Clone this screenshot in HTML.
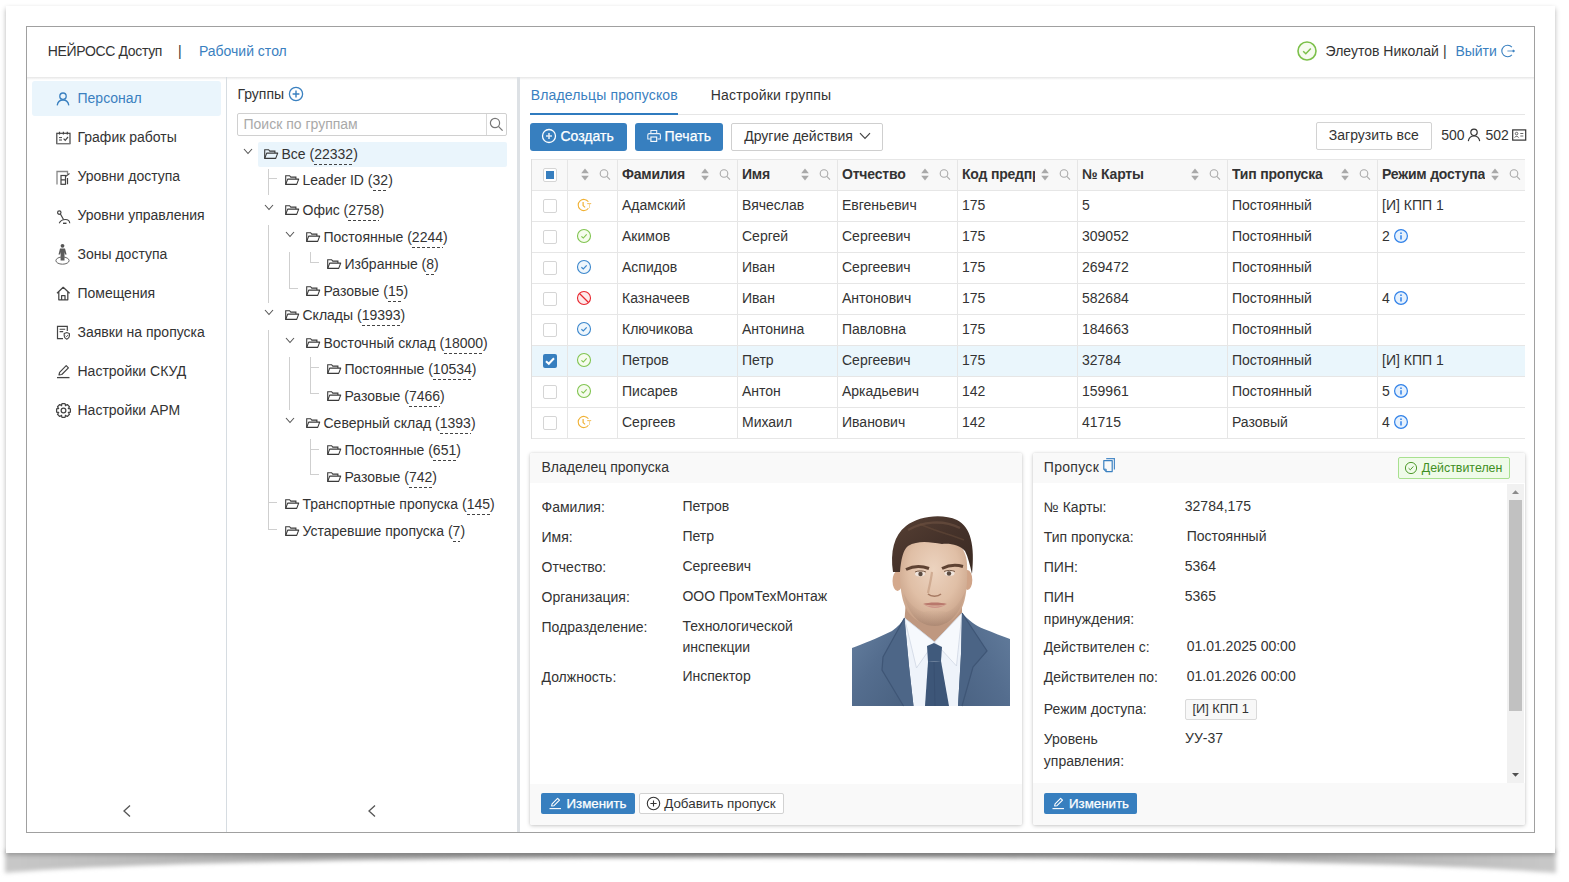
<!DOCTYPE html><html><head><meta charset="utf-8"><style>
*{box-sizing:border-box}
html,body{margin:0;padding:0}
body{width:1569px;height:882px;background:#fff;position:relative;overflow:hidden;font-family:"Liberation Sans",sans-serif;font-size:14px;color:#333}
.a{position:absolute}
.t{position:absolute;white-space:nowrap;line-height:16px;font-size:14px}
svg{position:absolute;overflow:visible}
.b{color:#3a80c0}
.cnt{background:linear-gradient(to right,#444 60%,transparent 60%) repeat-x 0 100%/5px 1px;padding-bottom:3px}
</style></head><body>
<svg style="left:0;top:0" width="1569" height="882">
<defs>
<filter id="bl" x="-5%" y="-100%" width="110%" height="300%"><feGaussianBlur stdDeviation="2.2"/></filter>
<linearGradient id="sg" x1="0" x2="1" y1="0" y2="0">
<stop offset="0" stop-color="#c8c8c8"/><stop offset="0.2" stop-color="#a8a8a8"/><stop offset="0.5" stop-color="#959595"/><stop offset="0.8" stop-color="#a8a8a8"/><stop offset="1" stop-color="#c8c8c8"/>
</linearGradient>
</defs>
<path d="M5 850 L1556 850 L1556 873 Q1380 858 780 857.5 Q180 858 5 873 Z" fill="url(#sg)" filter="url(#bl)"/>
</svg>
<div class="a" style="left:6px;top:6px;width:1549px;height:847px;background:#fff;box-shadow:0 1.5px 5px rgba(0,0,0,.3)"></div>
<div class="a" style="left:26px;top:26px;width:1509px;height:807px;border:1px solid #a0a0a0;background:#fff"></div>
<div class="a" style="left:27px;top:77px;width:1507px;height:3px;background:linear-gradient(#e6e6e6,#fff)"></div>
<div class="t" style="left:47.8px;top:43px;letter-spacing:-0.35px">НЕЙРОСС Доступ</div>
<div class="t" style="left:178px;top:43px;">|</div>
<div class="t" style="left:198.9px;top:43px;color:#3a80c0">Рабочий стол</div>
<svg style="left:1297px;top:41px" width="20" height="20" viewBox="0 0 20 20"><circle cx="10" cy="10" r="9" fill="#f6fbef" stroke="#7cc04a" stroke-width="1.6"/><path d="M6.2 10.3 L8.8 12.8 L13.8 7.4" fill="none" stroke="#7cc04a" stroke-width="1.5"/></svg>
<div class="t" style="left:1325.6px;top:43px;">Элеутов Николай</div>
<div class="t" style="left:1443px;top:43px;">|</div>
<div class="t" style="left:1455.4px;top:43px;color:#3a80c0">Выйти</div>
<svg style="left:1500px;top:44px" width="16" height="14" viewBox="0 0 16 14"><path d="M11.9 3.1 A5.8 5.8 0 1 0 11.9 10.9" fill="none" stroke="#3a80c0" stroke-width="1.1"/><path d="M7.4 7 H14.3" fill="none" stroke="#6fa2d2" stroke-width="1.1"/><path d="M13 5.9 L14.6 7 L13 8.1 Z" fill="#3a80c0" stroke="#3a80c0" stroke-width="0.8"/></svg>
<div class="a" style="left:226px;top:77px;width:1px;height:755px;background:#d6dce1"></div>
<div class="a" style="left:32px;top:81px;width:189px;height:35px;background:#eaf5fc;border-radius:3px"></div>
<div class="t" style="left:77.5px;top:90.2px;color:#3a80c0">Персонал</div>
<div class="t" style="left:77.5px;top:129.2px;">График работы</div>
<div class="t" style="left:77.5px;top:168.2px;">Уровни доступа</div>
<div class="t" style="left:77.5px;top:207.2px;">Уровни управления</div>
<div class="t" style="left:77.5px;top:246.2px;">Зоны доступа</div>
<div class="t" style="left:77.5px;top:285.2px;">Помещения</div>
<div class="t" style="left:77.5px;top:324.2px;">Заявки на пропуска</div>
<div class="t" style="left:77.5px;top:363.2px;">Настройки СКУД</div>
<div class="t" style="left:77.5px;top:402.2px;">Настройки АРМ</div>
<svg style="left:56px;top:92px" width="14" height="14" viewBox="0 0 14 14"><circle cx="7" cy="4.2" r="3.2" fill="none" stroke="#3a80c0" stroke-width="1.3"/><path d="M1.2 13.3 C1.8 9.5 4 8 7 8 C10 8 12.2 9.5 12.8 13.3" fill="none" stroke="#3a80c0" stroke-width="1.3"/></svg>
<svg style="left:56px;top:131px" width="15" height="14" viewBox="0 0 15 14"><rect x="0.8" y="2.3" width="13.2" height="10.3" fill="none" stroke="#444" stroke-width="1.2"/><path d="M3.5 0.8v2.6M7.4 0.8v2.6M11.3 0.8v2.6" stroke="#444" stroke-width="1.2"/><path d="M3 6.6h3M3 9h3" stroke="#444" stroke-width="1"/><path d="M7.6 7.6 L9.2 9.3 L12 6" fill="none" stroke="#444" stroke-width="1.2"/><path d="M0.8 12.6h13.2" stroke="#777" stroke-width="1.2"/></svg>
<svg style="left:56px;top:170px" width="15" height="15" viewBox="0 0 15 15"><path d="M1 14.5V1.5H11.5V4" fill="none" stroke="#888" stroke-width="1.3"/><rect x="5" y="5.5" width="4.5" height="8.8" fill="none" stroke="#444" stroke-width="1.2"/><path d="M11.5 8v6.3M5 9.8h4.5" stroke="#444" stroke-width="1.2"/><path d="M9.5 6.5 L13.5 3.5" stroke="#444" stroke-width="1.1"/></svg>
<svg style="left:57px;top:210px" width="14" height="15" viewBox="0 0 14 15"><circle cx="2.3" cy="2.6" r="1.7" fill="none" stroke="#444" stroke-width="1.2"/><path d="M3.4 4 L6.5 9.5" stroke="#444" stroke-width="1.2"/><path d="M2.2 13.2 C3.5 10.5 6 9.5 8.5 9.5 C11 9.5 12.5 11 12.8 13.2" fill="none" stroke="#444" stroke-width="1.1"/><path d="M6 13.3h3.5" stroke="#444" stroke-width="1.4"/></svg>
<svg style="left:55px;top:243px" width="16" height="23" viewBox="0 0 16 23"><circle cx="7.5" cy="2.8" r="1.9" fill="#555"/><path d="M5 5.5 h5 l1.6 6 h-1.5 l-0.6 -2.5 v8.5 h-3.9 v-8.5 l-0.6 2.5 h-1.5 Z" fill="#5a5a5a"/><ellipse cx="7.5" cy="17.6" rx="6.6" ry="3.6" fill="none" stroke="#666" stroke-width="1"/></svg>
<svg style="left:56px;top:286px" width="15" height="15" viewBox="0 0 15 15"><path d="M1 7.3 L7.2 1.3 L13.6 7.3 M2.8 5.8V13.8H11.8V5.8 M5.6 13.8V9.6H9V13.8" fill="none" stroke="#444" stroke-width="1.25" stroke-linejoin="round"/></svg>
<svg style="left:56px;top:325px" width="15" height="15" viewBox="0 0 15 15"><path d="M7 13.6H1.5V1.4H11.3V6" fill="none" stroke="#444" stroke-width="1.2"/><path d="M3.6 4.2h5.6M3.6 6.6h3.6" stroke="#444" stroke-width="1.1"/><path d="M8.2 8.6 L10.8 7.5 L13.4 8.6 V11 C13.4 12.6 12 13.6 10.8 14.2 C9.6 13.6 8.2 12.6 8.2 11 Z" fill="none" stroke="#444" stroke-width="1.1"/><path d="M9.6 10.7 L10.6 11.7 L12.2 9.9" fill="none" stroke="#444" stroke-width="0.9"/></svg>
<svg style="left:56px;top:364px" width="15" height="15" viewBox="0 0 15 15"><path d="M3 11 L3.6 8.3 L10.2 1.7 L12.4 3.9 L5.8 10.5 Z" fill="none" stroke="#444" stroke-width="1.2" stroke-linejoin="round"/><path d="M1 13.6H13.5" stroke="#444" stroke-width="1.3"/></svg>
<svg style="left:56px;top:403px" width="15" height="15" viewBox="0 0 14 14"><polygon points="13.44,5.56 13.44,8.44 11.47,9.00 11.58,8.75 12.57,10.54 10.54,12.57 8.75,11.58 9.00,11.47 8.44,13.44 5.56,13.44 5.00,11.47 5.25,11.58 3.46,12.57 1.43,10.54 2.42,8.75 2.53,9.00 0.56,8.44 0.56,5.56 2.53,5.00 2.42,5.25 1.43,3.46 3.46,1.43 5.25,2.42 5.00,2.53 5.56,0.56 8.44,0.56 9.00,2.53 8.75,2.42 10.54,1.43 12.57,3.46 11.58,5.25 11.47,5.00" fill="none" stroke="#444" stroke-width="1.15" stroke-linejoin="round"/><circle cx="7" cy="7" r="2.2" fill="none" stroke="#444" stroke-width="1.15"/></svg>
<svg style="left:122px;top:804px" width="10" height="14" viewBox="0 0 10 14"><path d="M8 1.5 L2 7 L8 12.5" fill="none" stroke="#555" stroke-width="1.3"/></svg>
<svg style="left:367px;top:804px" width="10" height="14" viewBox="0 0 10 14"><path d="M8 1.5 L2 7 L8 12.5" fill="none" stroke="#555" stroke-width="1.3"/></svg>
<div class="a" style="left:517px;top:77px;width:3px;height:755px;background:#dde1e5"></div>
<div class="t" style="left:237.4px;top:85.9px;">Группы</div>
<svg style="left:288px;top:86px" width="16" height="16" viewBox="0 0 16 16"><circle cx="8" cy="8" r="6.6" fill="none" stroke="#3a80c0" stroke-width="1.3"/><path d="M8 4.6V11.4M4.6 8H11.4" stroke="#3a80c0" stroke-width="1.4"/></svg>
<div class="a" style="left:237px;top:113px;width:270px;height:23px;border:1px solid #d0d0d0;border-radius:2px"></div>
<div class="a" style="left:486px;top:114px;width:1px;height:21px;background:#d8d8d8"></div>
<div class="t" style="left:243.5px;top:116px;color:#a9a9a9">Поиск по группам</div>
<svg style="left:489px;top:117px" width="15" height="15" viewBox="0 0 15 15"><circle cx="6" cy="6" r="4.6" fill="none" stroke="#777" stroke-width="1.2"/><path d="M9.4 9.4 L13.6 13.6" stroke="#777" stroke-width="1.3"/></svg>
<div class="a" style="left:258px;top:142px;width:249px;height:25px;background:#eaf5fc;border-radius:2px"></div>
<svg style="left:264px;top:149px" width="15" height="11" viewBox="0 0 15 11"><path d="M0.7 9.4V0.7H4.6L5.8 2.1H10.9V4.1" fill="none" stroke="#3a3a3a" stroke-width="1.1"/><path d="M0.7 9.4 L2.7 4.1 H13.7 L11.7 9.4 Z" fill="none" stroke="#3a3a3a" stroke-width="1.1" stroke-linejoin="round"/></svg>
<svg style="left:243.3px;top:148px" width="10" height="7" viewBox="0 0 10 7"><path d="M1 1 L5 5.5 L9 1" fill="none" stroke="#555" stroke-width="1.1"/></svg>
<div class="t" style="left:281.5px;top:146px;">Все (<span class="cnt">22332</span>)</div>
<svg style="left:285px;top:174.8px" width="15" height="11" viewBox="0 0 15 11"><path d="M0.7 9.4V0.7H4.6L5.8 2.1H10.9V4.1" fill="none" stroke="#3a3a3a" stroke-width="1.1"/><path d="M0.7 9.4 L2.7 4.1 H13.7 L11.7 9.4 Z" fill="none" stroke="#3a3a3a" stroke-width="1.1" stroke-linejoin="round"/></svg>
<div class="t" style="left:302.5px;top:171.8px;">Leader ID (<span class="cnt">32</span>)</div>
<svg style="left:285px;top:205px" width="15" height="11" viewBox="0 0 15 11"><path d="M0.7 9.4V0.7H4.6L5.8 2.1H10.9V4.1" fill="none" stroke="#3a3a3a" stroke-width="1.1"/><path d="M0.7 9.4 L2.7 4.1 H13.7 L11.7 9.4 Z" fill="none" stroke="#3a3a3a" stroke-width="1.1" stroke-linejoin="round"/></svg>
<svg style="left:264.3px;top:204px" width="10" height="7" viewBox="0 0 10 7"><path d="M1 1 L5 5.5 L9 1" fill="none" stroke="#555" stroke-width="1.1"/></svg>
<div class="t" style="left:302.5px;top:202px;">Офис (<span class="cnt">2758</span>)</div>
<svg style="left:306px;top:231.7px" width="15" height="11" viewBox="0 0 15 11"><path d="M0.7 9.4V0.7H4.6L5.8 2.1H10.9V4.1" fill="none" stroke="#3a3a3a" stroke-width="1.1"/><path d="M0.7 9.4 L2.7 4.1 H13.7 L11.7 9.4 Z" fill="none" stroke="#3a3a3a" stroke-width="1.1" stroke-linejoin="round"/></svg>
<svg style="left:285.3px;top:230.7px" width="10" height="7" viewBox="0 0 10 7"><path d="M1 1 L5 5.5 L9 1" fill="none" stroke="#555" stroke-width="1.1"/></svg>
<div class="t" style="left:323.5px;top:228.7px;">Постоянные (<span class="cnt">2244</span>)</div>
<svg style="left:327px;top:258.9px" width="15" height="11" viewBox="0 0 15 11"><path d="M0.7 9.4V0.7H4.6L5.8 2.1H10.9V4.1" fill="none" stroke="#3a3a3a" stroke-width="1.1"/><path d="M0.7 9.4 L2.7 4.1 H13.7 L11.7 9.4 Z" fill="none" stroke="#3a3a3a" stroke-width="1.1" stroke-linejoin="round"/></svg>
<div class="t" style="left:344.5px;top:255.89999999999998px;">Избранные (<span class="cnt">8</span>)</div>
<svg style="left:306px;top:285.6px" width="15" height="11" viewBox="0 0 15 11"><path d="M0.7 9.4V0.7H4.6L5.8 2.1H10.9V4.1" fill="none" stroke="#3a3a3a" stroke-width="1.1"/><path d="M0.7 9.4 L2.7 4.1 H13.7 L11.7 9.4 Z" fill="none" stroke="#3a3a3a" stroke-width="1.1" stroke-linejoin="round"/></svg>
<div class="t" style="left:323.5px;top:282.6px;">Разовые (<span class="cnt">15</span>)</div>
<svg style="left:285px;top:309.9px" width="15" height="11" viewBox="0 0 15 11"><path d="M0.7 9.4V0.7H4.6L5.8 2.1H10.9V4.1" fill="none" stroke="#3a3a3a" stroke-width="1.1"/><path d="M0.7 9.4 L2.7 4.1 H13.7 L11.7 9.4 Z" fill="none" stroke="#3a3a3a" stroke-width="1.1" stroke-linejoin="round"/></svg>
<svg style="left:264.3px;top:308.9px" width="10" height="7" viewBox="0 0 10 7"><path d="M1 1 L5 5.5 L9 1" fill="none" stroke="#555" stroke-width="1.1"/></svg>
<div class="t" style="left:302.5px;top:306.9px;">Склады (<span class="cnt">19393</span>)</div>
<svg style="left:306px;top:337.5px" width="15" height="11" viewBox="0 0 15 11"><path d="M0.7 9.4V0.7H4.6L5.8 2.1H10.9V4.1" fill="none" stroke="#3a3a3a" stroke-width="1.1"/><path d="M0.7 9.4 L2.7 4.1 H13.7 L11.7 9.4 Z" fill="none" stroke="#3a3a3a" stroke-width="1.1" stroke-linejoin="round"/></svg>
<svg style="left:285.3px;top:336.5px" width="10" height="7" viewBox="0 0 10 7"><path d="M1 1 L5 5.5 L9 1" fill="none" stroke="#555" stroke-width="1.1"/></svg>
<div class="t" style="left:323.5px;top:334.5px;">Восточный склад (<span class="cnt">18000</span>)</div>
<svg style="left:327px;top:364.2px" width="15" height="11" viewBox="0 0 15 11"><path d="M0.7 9.4V0.7H4.6L5.8 2.1H10.9V4.1" fill="none" stroke="#3a3a3a" stroke-width="1.1"/><path d="M0.7 9.4 L2.7 4.1 H13.7 L11.7 9.4 Z" fill="none" stroke="#3a3a3a" stroke-width="1.1" stroke-linejoin="round"/></svg>
<div class="t" style="left:344.5px;top:361.2px;">Постоянные (<span class="cnt">10534</span>)</div>
<svg style="left:327px;top:391.1px" width="15" height="11" viewBox="0 0 15 11"><path d="M0.7 9.4V0.7H4.6L5.8 2.1H10.9V4.1" fill="none" stroke="#3a3a3a" stroke-width="1.1"/><path d="M0.7 9.4 L2.7 4.1 H13.7 L11.7 9.4 Z" fill="none" stroke="#3a3a3a" stroke-width="1.1" stroke-linejoin="round"/></svg>
<div class="t" style="left:344.5px;top:388.1px;">Разовые (<span class="cnt">7466</span>)</div>
<svg style="left:306px;top:417.8px" width="15" height="11" viewBox="0 0 15 11"><path d="M0.7 9.4V0.7H4.6L5.8 2.1H10.9V4.1" fill="none" stroke="#3a3a3a" stroke-width="1.1"/><path d="M0.7 9.4 L2.7 4.1 H13.7 L11.7 9.4 Z" fill="none" stroke="#3a3a3a" stroke-width="1.1" stroke-linejoin="round"/></svg>
<svg style="left:285.3px;top:416.8px" width="10" height="7" viewBox="0 0 10 7"><path d="M1 1 L5 5.5 L9 1" fill="none" stroke="#555" stroke-width="1.1"/></svg>
<div class="t" style="left:323.5px;top:414.8px;">Северный склад (<span class="cnt">1393</span>)</div>
<svg style="left:327px;top:444.8px" width="15" height="11" viewBox="0 0 15 11"><path d="M0.7 9.4V0.7H4.6L5.8 2.1H10.9V4.1" fill="none" stroke="#3a3a3a" stroke-width="1.1"/><path d="M0.7 9.4 L2.7 4.1 H13.7 L11.7 9.4 Z" fill="none" stroke="#3a3a3a" stroke-width="1.1" stroke-linejoin="round"/></svg>
<div class="t" style="left:344.5px;top:441.8px;">Постоянные (<span class="cnt">651</span>)</div>
<svg style="left:327px;top:471.7px" width="15" height="11" viewBox="0 0 15 11"><path d="M0.7 9.4V0.7H4.6L5.8 2.1H10.9V4.1" fill="none" stroke="#3a3a3a" stroke-width="1.1"/><path d="M0.7 9.4 L2.7 4.1 H13.7 L11.7 9.4 Z" fill="none" stroke="#3a3a3a" stroke-width="1.1" stroke-linejoin="round"/></svg>
<div class="t" style="left:344.5px;top:468.7px;">Разовые (<span class="cnt">742</span>)</div>
<svg style="left:285px;top:499.2px" width="15" height="11" viewBox="0 0 15 11"><path d="M0.7 9.4V0.7H4.6L5.8 2.1H10.9V4.1" fill="none" stroke="#3a3a3a" stroke-width="1.1"/><path d="M0.7 9.4 L2.7 4.1 H13.7 L11.7 9.4 Z" fill="none" stroke="#3a3a3a" stroke-width="1.1" stroke-linejoin="round"/></svg>
<div class="t" style="left:302.5px;top:496.2px;">Транспортные пропуска (<span class="cnt">145</span>)</div>
<svg style="left:285px;top:525.9px" width="15" height="11" viewBox="0 0 15 11"><path d="M0.7 9.4V0.7H4.6L5.8 2.1H10.9V4.1" fill="none" stroke="#3a3a3a" stroke-width="1.1"/><path d="M0.7 9.4 L2.7 4.1 H13.7 L11.7 9.4 Z" fill="none" stroke="#3a3a3a" stroke-width="1.1" stroke-linejoin="round"/></svg>
<div class="t" style="left:302.5px;top:522.9px;">Устаревшие пропуска (<span class="cnt">7</span>)</div>
<div class="a" style="left:268px;top:169px;width:1px;height:26px;background:#cfcfcf"></div>
<div class="a" style="left:268px;top:178px;width:9px;height:1px;background:#cfcfcf"></div>
<div class="a" style="left:268px;top:225px;width:1px;height:78px;background:#cfcfcf"></div>
<div class="a" style="left:289px;top:252px;width:1px;height:37px;background:#cfcfcf"></div>
<div class="a" style="left:289px;top:288px;width:9px;height:1px;background:#cfcfcf"></div>
<div class="a" style="left:310px;top:252px;width:1px;height:11px;background:#cfcfcf"></div>
<div class="a" style="left:310px;top:262px;width:9px;height:1px;background:#cfcfcf"></div>
<div class="a" style="left:268px;top:330px;width:1px;height:200px;background:#cfcfcf"></div>
<div class="a" style="left:268px;top:502px;width:9px;height:1px;background:#cfcfcf"></div>
<div class="a" style="left:268px;top:529px;width:9px;height:1px;background:#cfcfcf"></div>
<div class="a" style="left:289px;top:357px;width:1px;height:53px;background:#cfcfcf"></div>
<div class="a" style="left:310px;top:357px;width:1px;height:37px;background:#cfcfcf"></div>
<div class="a" style="left:310px;top:367px;width:9px;height:1px;background:#cfcfcf"></div>
<div class="a" style="left:310px;top:393px;width:9px;height:1px;background:#cfcfcf"></div>
<div class="a" style="left:310px;top:439px;width:1px;height:36px;background:#cfcfcf"></div>
<div class="a" style="left:310px;top:449px;width:9px;height:1px;background:#cfcfcf"></div>
<div class="a" style="left:310px;top:474px;width:9px;height:1px;background:#cfcfcf"></div>
<div class="a" style="left:530px;top:114px;width:995px;height:1px;background:#e6e6e6"></div>
<div class="a" style="left:530px;top:113px;width:148px;height:2px;background:#2f7bbf"></div>
<div class="t" style="left:530.7px;top:87px;color:#3a80c0;letter-spacing:0.15px">Владельцы пропусков</div>
<div class="t" style="left:710.7px;top:87px;letter-spacing:0.19px">Настройки группы</div>
<div class="a" style="left:530px;top:123px;width:97px;height:28px;background:#377fbf;border-radius:3px"></div>
<svg style="left:541px;top:128px" width="16" height="16" viewBox="0 0 16 16"><circle cx="8" cy="8" r="6.5" fill="none" stroke="#fff" stroke-width="1.3"/><path d="M8 5V11M5 8H11" stroke="#dfe9f3" stroke-width="1.6"/></svg>
<div class="t" style="left:560.5px;top:128px;color:#fff;-webkit-text-stroke:0.25px #fff">Создать</div>
<div class="a" style="left:635px;top:123px;width:88px;height:28px;background:#377fbf;border-radius:3px"></div>
<svg style="left:646px;top:129px" width="16" height="14" viewBox="0 0 16 14"><path d="M4.9 4.4V1.5H10.7V4.4" fill="none" stroke="#e8f0f8" stroke-width="1.1"/><path d="M4.4 10 H1.8 V6 Q1.8 4.6 3.2 4.6 H13 Q14.4 4.6 14.4 6 V10 H11.6" fill="none" stroke="#e8f0f8" stroke-width="1.1"/><rect x="4.9" y="8" width="5.8" height="4.4" fill="#377fbf" stroke="#fff" stroke-width="1.1"/></svg>
<div class="t" style="left:664.5px;top:128px;color:#fff;-webkit-text-stroke:0.25px #fff;letter-spacing:0.15px">Печать</div>
<div class="a" style="left:731px;top:123px;width:152px;height:28px;border:1px solid #cfcfcf;border-radius:2px;background:#fff"></div>
<div class="t" style="left:744.2px;top:128px;">Другие действия</div>
<svg style="left:859px;top:132px" width="12" height="8" viewBox="0 0 12 8"><path d="M1 1.2 L6 6.5 L11 1.2" fill="none" stroke="#444" stroke-width="1.2"/></svg>
<div class="a" style="left:1316px;top:122px;width:116px;height:28px;border:1px solid #d2d2d2;border-radius:2px;background:#fff"></div>
<div class="t" style="left:1328.8px;top:126.80000000000001px;">Загрузить все</div>
<div class="t" style="left:1441.2px;top:126.80000000000001px;">500</div>
<svg style="left:1467px;top:128px" width="14" height="14" viewBox="0 0 14 14"><circle cx="7" cy="4.3" r="3.2" fill="none" stroke="#333" stroke-width="1.2"/><path d="M1.3 13.2 C1.8 9.5 4 8 7 8 C10 8 12.2 9.5 12.7 13.2" fill="none" stroke="#333" stroke-width="1.2"/></svg>
<div class="t" style="left:1485.5px;top:126.80000000000001px;">502</div>
<svg style="left:1512px;top:129px" width="15" height="12" viewBox="0 0 15 12"><rect x="0.7" y="0.9" width="13" height="10.2" fill="none" stroke="#333" stroke-width="1.2"/><circle cx="4.6" cy="4.6" r="1.3" fill="none" stroke="#555" stroke-width="0.9"/><path d="M2.6 8.6 C3 7 6.2 7 6.6 8.6 M8.3 4.5h3M8.3 7h3" fill="none" stroke="#555" stroke-width="0.9"/></svg>
<div class="a" style="left:531px;top:159px;width:994px;height:31px;background:#f8f8f8"></div>
<div class="a" style="left:531px;top:159px;width:994px;height:1px;background:#e6e6e6"></div>
<div class="a" style="left:531px;top:190px;width:994px;height:1px;background:#e6e6e6"></div>
<div class="a" style="left:531px;top:221px;width:994px;height:1px;background:#e6e6e6"></div>
<div class="a" style="left:531px;top:252px;width:994px;height:1px;background:#e6e6e6"></div>
<div class="a" style="left:531px;top:283px;width:994px;height:1px;background:#e6e6e6"></div>
<div class="a" style="left:531px;top:314px;width:994px;height:1px;background:#e6e6e6"></div>
<div class="a" style="left:531px;top:345px;width:994px;height:1px;background:#e6e6e6"></div>
<div class="a" style="left:531px;top:376px;width:994px;height:1px;background:#e6e6e6"></div>
<div class="a" style="left:531px;top:407px;width:994px;height:1px;background:#e6e6e6"></div>
<div class="a" style="left:531px;top:438px;width:994px;height:1px;background:#e6e6e6"></div>
<div class="a" style="left:532px;top:346px;width:993px;height:30px;background:#eaf6fc"></div>
<div class="a" style="left:531px;top:159px;width:1px;height:280px;background:#dedede"></div>
<div class="a" style="left:567px;top:159px;width:1px;height:280px;background:#e6e6e6"></div>
<div class="a" style="left:617px;top:159px;width:1px;height:280px;background:#e6e6e6"></div>
<div class="a" style="left:737px;top:159px;width:1px;height:280px;background:#e6e6e6"></div>
<div class="a" style="left:837px;top:159px;width:1px;height:280px;background:#e6e6e6"></div>
<div class="a" style="left:957px;top:159px;width:1px;height:280px;background:#e6e6e6"></div>
<div class="a" style="left:1077px;top:159px;width:1px;height:280px;background:#e6e6e6"></div>
<div class="a" style="left:1227px;top:159px;width:1px;height:280px;background:#e6e6e6"></div>
<div class="a" style="left:1377px;top:159px;width:1px;height:280px;background:#e6e6e6"></div>
<svg style="left:581px;top:168px" width="8" height="13" viewBox="0 0 8 13"><path d="M4 0.6 L7.8 5.3 H0.2 Z M0.2 7.7 H7.8 L4 12.4 Z" fill="#a9a9a9"/></svg>
<svg style="left:599px;top:168px" width="12" height="13" viewBox="0 0 12 13"><circle cx="5" cy="5.5" r="3.8" fill="none" stroke="#a9a9a9" stroke-width="1.1"/><path d="M7.8 8.3 L11 11.6" stroke="#a9a9a9" stroke-width="1.1"/></svg>
<svg style="left:701px;top:168px" width="8" height="13" viewBox="0 0 8 13"><path d="M4 0.6 L7.8 5.3 H0.2 Z M0.2 7.7 H7.8 L4 12.4 Z" fill="#a9a9a9"/></svg>
<svg style="left:719px;top:168px" width="12" height="13" viewBox="0 0 12 13"><circle cx="5" cy="5.5" r="3.8" fill="none" stroke="#a9a9a9" stroke-width="1.1"/><path d="M7.8 8.3 L11 11.6" stroke="#a9a9a9" stroke-width="1.1"/></svg>
<div class="t" style="left:622px;top:166px;font-weight:bold;width:73px;overflow:hidden;letter-spacing:-0.2px">Фамилия</div>
<svg style="left:801px;top:168px" width="8" height="13" viewBox="0 0 8 13"><path d="M4 0.6 L7.8 5.3 H0.2 Z M0.2 7.7 H7.8 L4 12.4 Z" fill="#a9a9a9"/></svg>
<svg style="left:819px;top:168px" width="12" height="13" viewBox="0 0 12 13"><circle cx="5" cy="5.5" r="3.8" fill="none" stroke="#a9a9a9" stroke-width="1.1"/><path d="M7.8 8.3 L11 11.6" stroke="#a9a9a9" stroke-width="1.1"/></svg>
<div class="t" style="left:742px;top:166px;font-weight:bold;width:53px;overflow:hidden;letter-spacing:-0.2px">Имя</div>
<svg style="left:921px;top:168px" width="8" height="13" viewBox="0 0 8 13"><path d="M4 0.6 L7.8 5.3 H0.2 Z M0.2 7.7 H7.8 L4 12.4 Z" fill="#a9a9a9"/></svg>
<svg style="left:939px;top:168px" width="12" height="13" viewBox="0 0 12 13"><circle cx="5" cy="5.5" r="3.8" fill="none" stroke="#a9a9a9" stroke-width="1.1"/><path d="M7.8 8.3 L11 11.6" stroke="#a9a9a9" stroke-width="1.1"/></svg>
<div class="t" style="left:842px;top:166px;font-weight:bold;width:73px;overflow:hidden;letter-spacing:-0.2px">Отчество</div>
<svg style="left:1041px;top:168px" width="8" height="13" viewBox="0 0 8 13"><path d="M4 0.6 L7.8 5.3 H0.2 Z M0.2 7.7 H7.8 L4 12.4 Z" fill="#a9a9a9"/></svg>
<svg style="left:1059px;top:168px" width="12" height="13" viewBox="0 0 12 13"><circle cx="5" cy="5.5" r="3.8" fill="none" stroke="#a9a9a9" stroke-width="1.1"/><path d="M7.8 8.3 L11 11.6" stroke="#a9a9a9" stroke-width="1.1"/></svg>
<div class="t" style="left:962px;top:166px;font-weight:bold;width:73px;overflow:hidden;letter-spacing:-0.2px">Код предприятия</div>
<svg style="left:1191px;top:168px" width="8" height="13" viewBox="0 0 8 13"><path d="M4 0.6 L7.8 5.3 H0.2 Z M0.2 7.7 H7.8 L4 12.4 Z" fill="#a9a9a9"/></svg>
<svg style="left:1209px;top:168px" width="12" height="13" viewBox="0 0 12 13"><circle cx="5" cy="5.5" r="3.8" fill="none" stroke="#a9a9a9" stroke-width="1.1"/><path d="M7.8 8.3 L11 11.6" stroke="#a9a9a9" stroke-width="1.1"/></svg>
<div class="t" style="left:1082px;top:166px;font-weight:bold;width:103px;overflow:hidden;letter-spacing:-0.2px">№ Карты</div>
<svg style="left:1341px;top:168px" width="8" height="13" viewBox="0 0 8 13"><path d="M4 0.6 L7.8 5.3 H0.2 Z M0.2 7.7 H7.8 L4 12.4 Z" fill="#a9a9a9"/></svg>
<svg style="left:1359px;top:168px" width="12" height="13" viewBox="0 0 12 13"><circle cx="5" cy="5.5" r="3.8" fill="none" stroke="#a9a9a9" stroke-width="1.1"/><path d="M7.8 8.3 L11 11.6" stroke="#a9a9a9" stroke-width="1.1"/></svg>
<div class="t" style="left:1232px;top:166px;font-weight:bold;width:103px;overflow:hidden;letter-spacing:-0.2px">Тип пропуска</div>
<svg style="left:1491px;top:168px" width="8" height="13" viewBox="0 0 8 13"><path d="M4 0.6 L7.8 5.3 H0.2 Z M0.2 7.7 H7.8 L4 12.4 Z" fill="#a9a9a9"/></svg>
<svg style="left:1509px;top:168px" width="12" height="13" viewBox="0 0 12 13"><circle cx="5" cy="5.5" r="3.8" fill="none" stroke="#a9a9a9" stroke-width="1.1"/><path d="M7.8 8.3 L11 11.6" stroke="#a9a9a9" stroke-width="1.1"/></svg>
<div class="t" style="left:1382px;top:166px;font-weight:bold;width:103px;overflow:hidden;letter-spacing:-0.2px">Режим доступа</div>
<div class="a" style="left:543px;top:168px;width:14px;height:14px;border:1.5px solid #d5d5d5;border-radius:2px;background:#fff"></div>
<div class="a" style="left:546px;top:171px;width:8px;height:8px;background:#377fbf"></div>
<div class="a" style="left:543px;top:199px;width:14px;height:14px;border:1.5px solid #d5d5d5;border-radius:2px;background:#fff"></div>
<svg style="left:576px;top:196.8px" width="16" height="16" viewBox="0 0 16 16"><path d="M12.4 4.8 A5.6 5.6 0 1 0 12.4 11.2" fill="none" stroke="#f0b134" stroke-width="1.1"/><path d="M7.1 4.9 V8.6 L9.1 10.4" fill="none" stroke="#f0b134" stroke-width="1.2"/><path d="M11.2 6.6 H15.2" stroke="#f3c060" stroke-width="1.1"/><path d="M13.5 6.6 V11" stroke="#f7d89a" stroke-width="1"/></svg>
<div class="t" style="left:622px;top:196.9px;">Адамский</div>
<div class="t" style="left:742px;top:196.9px;">Вячеслав</div>
<div class="t" style="left:842px;top:196.9px;">Евгеньевич</div>
<div class="t" style="left:962px;top:196.9px;">175</div>
<div class="t" style="left:1082px;top:196.9px;">5</div>
<div class="t" style="left:1232px;top:196.9px;">Постоянный</div>
<div class="t" style="left:1382px;top:196.9px;">[И] КПП 1</div>
<div class="a" style="left:543px;top:230px;width:14px;height:14px;border:1.5px solid #d5d5d5;border-radius:2px;background:#fff"></div>
<svg style="left:576px;top:227.8px" width="16" height="16" viewBox="0 0 16 16"><circle cx="8" cy="8" r="6.5" fill="#f6fcee" stroke="#80c450" stroke-width="1.1"/><path d="M5.4 8.3 L7.3 10 L10.7 6.3" fill="none" stroke="#80c450" stroke-width="1.1"/></svg>
<div class="t" style="left:622px;top:227.9px;">Акимов</div>
<div class="t" style="left:742px;top:227.9px;">Сергей</div>
<div class="t" style="left:842px;top:227.9px;">Сергеевич</div>
<div class="t" style="left:962px;top:227.9px;">175</div>
<div class="t" style="left:1082px;top:227.9px;">309052</div>
<div class="t" style="left:1232px;top:227.9px;">Постоянный</div>
<div class="t" style="left:1382px;top:227.9px;">2</div>
<svg style="left:1393px;top:227.8px" width="16" height="16" viewBox="0 0 16 16"><circle cx="8" cy="8" r="6.4" fill="#e6f1fd" stroke="#2f80e8" stroke-width="1.2"/><path d="M8 7.2V11.4" stroke="#2f80e8" stroke-width="1.5"/><circle cx="8" cy="5.2" r="0.85" fill="#2f80e8"/></svg>
<div class="a" style="left:543px;top:261px;width:14px;height:14px;border:1.5px solid #d5d5d5;border-radius:2px;background:#fff"></div>
<svg style="left:576px;top:258.8px" width="16" height="16" viewBox="0 0 16 16"><circle cx="8" cy="8" r="6.5" fill="#eef6fc" stroke="#3a86cc" stroke-width="1.1"/><path d="M5.4 8.3 L7.3 10 L10.7 6.3" fill="none" stroke="#3a86cc" stroke-width="1.2"/></svg>
<div class="t" style="left:622px;top:258.9px;">Аспидов</div>
<div class="t" style="left:742px;top:258.9px;">Иван</div>
<div class="t" style="left:842px;top:258.9px;">Сергеевич</div>
<div class="t" style="left:962px;top:258.9px;">175</div>
<div class="t" style="left:1082px;top:258.9px;">269472</div>
<div class="t" style="left:1232px;top:258.9px;">Постоянный</div>
<div class="a" style="left:543px;top:292px;width:14px;height:14px;border:1.5px solid #d5d5d5;border-radius:2px;background:#fff"></div>
<svg style="left:576px;top:289.8px" width="16" height="16" viewBox="0 0 16 16"><circle cx="8" cy="8" r="6.5" fill="#fde9ea" stroke="#e8262e" stroke-width="1.1"/><path d="M3.5 3.5 L12.5 12.5" stroke="#e8262e" stroke-width="1.2"/></svg>
<div class="t" style="left:622px;top:289.9px;">Казначеев</div>
<div class="t" style="left:742px;top:289.9px;">Иван</div>
<div class="t" style="left:842px;top:289.9px;">Антонович</div>
<div class="t" style="left:962px;top:289.9px;">175</div>
<div class="t" style="left:1082px;top:289.9px;">582684</div>
<div class="t" style="left:1232px;top:289.9px;">Постоянный</div>
<div class="t" style="left:1382px;top:289.9px;">4</div>
<svg style="left:1393px;top:289.8px" width="16" height="16" viewBox="0 0 16 16"><circle cx="8" cy="8" r="6.4" fill="#e6f1fd" stroke="#2f80e8" stroke-width="1.2"/><path d="M8 7.2V11.4" stroke="#2f80e8" stroke-width="1.5"/><circle cx="8" cy="5.2" r="0.85" fill="#2f80e8"/></svg>
<div class="a" style="left:543px;top:323px;width:14px;height:14px;border:1.5px solid #d5d5d5;border-radius:2px;background:#fff"></div>
<svg style="left:576px;top:320.8px" width="16" height="16" viewBox="0 0 16 16"><circle cx="8" cy="8" r="6.5" fill="#eef6fc" stroke="#3a86cc" stroke-width="1.1"/><path d="M5.4 8.3 L7.3 10 L10.7 6.3" fill="none" stroke="#3a86cc" stroke-width="1.2"/></svg>
<div class="t" style="left:622px;top:320.9px;">Ключикова</div>
<div class="t" style="left:742px;top:320.9px;">Антонина</div>
<div class="t" style="left:842px;top:320.9px;">Павловна</div>
<div class="t" style="left:962px;top:320.9px;">175</div>
<div class="t" style="left:1082px;top:320.9px;">184663</div>
<div class="t" style="left:1232px;top:320.9px;">Постоянный</div>
<div class="a" style="left:543px;top:354px;width:14px;height:14px;background:#377fbf;border-radius:2px"></div>
<svg style="left:543px;top:354px" width="14" height="14" viewBox="0 0 14 14"><path d="M3 7.2 L5.8 9.8 L11 4.2" fill="none" stroke="#fff" stroke-width="2"/></svg>
<svg style="left:576px;top:351.8px" width="16" height="16" viewBox="0 0 16 16"><circle cx="8" cy="8" r="6.5" fill="#f6fcee" stroke="#80c450" stroke-width="1.1"/><path d="M5.4 8.3 L7.3 10 L10.7 6.3" fill="none" stroke="#80c450" stroke-width="1.1"/></svg>
<div class="t" style="left:622px;top:351.9px;">Петров</div>
<div class="t" style="left:742px;top:351.9px;">Петр</div>
<div class="t" style="left:842px;top:351.9px;">Сергеевич</div>
<div class="t" style="left:962px;top:351.9px;">175</div>
<div class="t" style="left:1082px;top:351.9px;">32784</div>
<div class="t" style="left:1232px;top:351.9px;">Постоянный</div>
<div class="t" style="left:1382px;top:351.9px;">[И] КПП 1</div>
<div class="a" style="left:543px;top:385px;width:14px;height:14px;border:1.5px solid #d5d5d5;border-radius:2px;background:#fff"></div>
<svg style="left:576px;top:382.8px" width="16" height="16" viewBox="0 0 16 16"><circle cx="8" cy="8" r="6.5" fill="#f6fcee" stroke="#80c450" stroke-width="1.1"/><path d="M5.4 8.3 L7.3 10 L10.7 6.3" fill="none" stroke="#80c450" stroke-width="1.1"/></svg>
<div class="t" style="left:622px;top:382.9px;">Писарев</div>
<div class="t" style="left:742px;top:382.9px;">Антон</div>
<div class="t" style="left:842px;top:382.9px;">Аркадьевич</div>
<div class="t" style="left:962px;top:382.9px;">142</div>
<div class="t" style="left:1082px;top:382.9px;">159961</div>
<div class="t" style="left:1232px;top:382.9px;">Постоянный</div>
<div class="t" style="left:1382px;top:382.9px;">5</div>
<svg style="left:1393px;top:382.8px" width="16" height="16" viewBox="0 0 16 16"><circle cx="8" cy="8" r="6.4" fill="#e6f1fd" stroke="#2f80e8" stroke-width="1.2"/><path d="M8 7.2V11.4" stroke="#2f80e8" stroke-width="1.5"/><circle cx="8" cy="5.2" r="0.85" fill="#2f80e8"/></svg>
<div class="a" style="left:543px;top:416px;width:14px;height:14px;border:1.5px solid #d5d5d5;border-radius:2px;background:#fff"></div>
<svg style="left:576px;top:413.8px" width="16" height="16" viewBox="0 0 16 16"><path d="M12.4 4.8 A5.6 5.6 0 1 0 12.4 11.2" fill="none" stroke="#f0b134" stroke-width="1.1"/><path d="M7.1 4.9 V8.6 L9.1 10.4" fill="none" stroke="#f0b134" stroke-width="1.2"/><path d="M11.2 6.6 H15.2" stroke="#f3c060" stroke-width="1.1"/><path d="M13.5 6.6 V11" stroke="#f7d89a" stroke-width="1"/></svg>
<div class="t" style="left:622px;top:413.9px;">Сергеев</div>
<div class="t" style="left:742px;top:413.9px;">Михаил</div>
<div class="t" style="left:842px;top:413.9px;">Иванович</div>
<div class="t" style="left:962px;top:413.9px;">142</div>
<div class="t" style="left:1082px;top:413.9px;">41715</div>
<div class="t" style="left:1232px;top:413.9px;">Разовый</div>
<div class="t" style="left:1382px;top:413.9px;">4</div>
<svg style="left:1393px;top:413.8px" width="16" height="16" viewBox="0 0 16 16"><circle cx="8" cy="8" r="6.4" fill="#e6f1fd" stroke="#2f80e8" stroke-width="1.2"/><path d="M8 7.2V11.4" stroke="#2f80e8" stroke-width="1.5"/><circle cx="8" cy="5.2" r="0.85" fill="#2f80e8"/></svg>
<div class="a" style="left:530px;top:453px;width:492px;height:372px;background:#fff;border-radius:2px;box-shadow:0 1px 4px rgba(0,0,0,.2),0 0 2px rgba(0,0,0,.1)"></div>
<div class="a" style="left:530px;top:453px;width:492px;height:30px;background:#f9f9f9;border-radius:2px 2px 0 0"></div>
<div class="a" style="left:530px;top:784px;width:492px;height:41px;background:#f9f9f9;border-radius:0 0 2px 2px"></div>
<div class="t" style="left:541.5px;top:458.6px;">Владелец пропуска</div>
<div class="t" style="left:541.5px;top:499.20000000000005px;">Фамилия:</div>
<div class="t" style="left:682.4px;top:498.20000000000005px;">Петров</div>
<div class="t" style="left:541.5px;top:528.7px;">Имя:</div>
<div class="t" style="left:682.4px;top:527.7px;">Петр</div>
<div class="t" style="left:541.5px;top:559.1px;">Отчество:</div>
<div class="t" style="left:682.4px;top:558.1px;">Сергеевич</div>
<div class="t" style="left:541.5px;top:588.6px;">Организация:</div>
<div class="t" style="left:682.4px;top:587.6px;">ООО ПромТехМонтаж</div>
<div class="t" style="left:541.5px;top:619.3px;">Подразделение:</div>
<div class="t" style="left:682.4px;top:618.3px;">Технологической</div>
<div class="t" style="left:682.4px;top:639.3px;">инспекции</div>
<div class="t" style="left:541.5px;top:668.8px;">Должность:</div>
<div class="t" style="left:682.4px;top:667.8px;">Инспектор</div>
<div class="a" style="left:541px;top:793px;width:94px;height:21px;background:#377fbf;border-radius:2px"></div>
<svg style="left:549px;top:797px" width="13" height="13" viewBox="0 0 13 13"><path d="M2.6 9 L3.1 6.8 L8.6 1.3 L10.5 3.2 L5 8.7 Z" fill="none" stroke="#fff" stroke-width="1.1" stroke-linejoin="round"/><path d="M0.5 11.6H12" stroke="#fff" stroke-width="1.1"/></svg>
<div class="t" style="left:566.5px;top:796px;color:#fff;font-size:13.3px;-webkit-text-stroke:0.25px #fff">Изменить</div>
<div class="a" style="left:639px;top:793px;width:145px;height:21px;border:1px solid #d2d2d2;border-radius:2px;background:#fff"></div>
<svg style="left:646px;top:796px" width="15" height="15" viewBox="0 0 15 15"><circle cx="7.5" cy="7.5" r="6.2" fill="none" stroke="#333" stroke-width="1.1"/><path d="M7.5 4.4V10.6M4.4 7.5H10.6" stroke="#333" stroke-width="1.1"/></svg>
<div class="t" style="left:664.2px;top:795.8px;font-size:13.4px">Добавить пропуск</div>
<div class="a" style="left:1033px;top:453px;width:492px;height:372px;background:#fff;border-radius:2px;box-shadow:0 1px 4px rgba(0,0,0,.2),0 0 2px rgba(0,0,0,.1)"></div>
<div class="a" style="left:1033px;top:453px;width:492px;height:30px;background:#f9f9f9;border-radius:2px 2px 0 0"></div>
<div class="a" style="left:1033px;top:783px;width:492px;height:42px;background:#f9f9f9;border-radius:0 0 2px 2px"></div>
<div class="t" style="left:1043.8px;top:458.5px;letter-spacing:0.3px">Пропуск</div>
<svg style="left:1102px;top:456px" width="15" height="17" viewBox="0 0 15 17"><path d="M4.2 2.6 H12.4 V13.6" fill="none" stroke="#4d8cc8" stroke-width="1.2"/><path d="M1.8 4.6 H10.2 V15.6 H4.2 L1.8 13.2 Z" fill="#fafafa" stroke="#3a80c0" stroke-width="1.2" stroke-linejoin="round"/><path d="M1.8 13.2 H4.2 V15.6" fill="none" stroke="#3a80c0" stroke-width="1"/></svg>
<div class="a" style="left:1398px;top:457px;width:112px;height:22px;border:1px solid #a8e08f;background:#effbe9;border-radius:2px"></div>
<svg style="left:1404px;top:461px" width="14" height="14" viewBox="0 0 14 14"><circle cx="7" cy="7" r="5.6" fill="none" stroke="#4f9a2c" stroke-width="1"/><path d="M4.6 7.2 L6.3 8.8 L9.4 5.4" fill="none" stroke="#4f9a2c" stroke-width="1"/></svg>
<div class="t" style="left:1421.8px;top:459.5px;color:#3f8f24;font-size:12.4px">Действителен</div>
<div class="t" style="left:1043.8px;top:498.7px;">№ Карты:</div>
<div class="t" style="left:1184.8px;top:497.7px;">32784,175</div>
<div class="t" style="left:1043.8px;top:529.1px;">Тип пропуска:</div>
<div class="t" style="left:1186.7px;top:528.1px;">Постоянный</div>
<div class="t" style="left:1043.8px;top:559px;">ПИН:</div>
<div class="t" style="left:1184.8px;top:558px;">5364</div>
<div class="t" style="left:1043.8px;top:588.8px;">ПИН</div>
<div class="t" style="left:1184.8px;top:587.8px;">5365</div>
<div class="t" style="left:1043.8px;top:611px;">принуждения:</div>
<div class="t" style="left:1043.8px;top:638.5px;">Действителен с:</div>
<div class="t" style="left:1186.7px;top:637.5px;">01.01.2025 00:00</div>
<div class="t" style="left:1043.8px;top:669.4px;">Действителен по:</div>
<div class="t" style="left:1186.7px;top:668.4px;">01.01.2026 00:00</div>
<div class="t" style="left:1043.8px;top:700.9px;">Режим доступа:</div>
<div class="t" style="left:1043.8px;top:730.7px;">Уровень</div>
<div class="t" style="left:1185px;top:729.7px;">УУ-37</div>
<div class="t" style="left:1043.8px;top:752.9px;">управления:</div>
<div class="a" style="left:1185px;top:699px;width:72px;height:21px;border:1px solid #dadada;background:#f8f8f8;border-radius:2px"></div>
<div class="t" style="left:1192.4px;top:701px;font-size:12.8px">[И] КПП 1</div>
<div class="a" style="left:1507px;top:484px;width:17px;height:299px;background:#f1f1f1"></div>
<div class="a" style="left:1509px;top:500px;width:13px;height:211px;background:#c1c1c1"></div>
<svg style="left:1510px;top:488px" width="11" height="8" viewBox="0 0 11 8"><path d="M2 6 L5.5 2.2 L9 6 Z" fill="#8a8a8a"/></svg>
<svg style="left:1510px;top:771px" width="11" height="8" viewBox="0 0 11 8"><path d="M2 2 L5.5 5.8 L9 2 Z" fill="#505050"/></svg>
<div class="a" style="left:1044px;top:793px;width:93px;height:21px;background:#377fbf;border-radius:2px"></div>
<svg style="left:1052px;top:797px" width="13" height="13" viewBox="0 0 13 13"><path d="M2.6 9 L3.1 6.8 L8.6 1.3 L10.5 3.2 L5 8.7 Z" fill="none" stroke="#fff" stroke-width="1.1" stroke-linejoin="round"/><path d="M0.5 11.6H12" stroke="#fff" stroke-width="1.1"/></svg>
<div class="t" style="left:1069px;top:796px;color:#fff;font-size:13.3px;-webkit-text-stroke:0.25px #fff">Изменить</div>
<svg style="left:850px;top:510px" width="162" height="198" viewBox="0 0 162 198">
<defs>
<linearGradient id="suit" x1="0" y1="0" x2="1" y2="1"><stop offset="0" stop-color="#6680a0"/><stop offset="0.45" stop-color="#546d8e"/><stop offset="1" stop-color="#48607f"/></linearGradient>
<linearGradient id="suit2" x1="1" y1="0" x2="0" y2="1"><stop offset="0" stop-color="#637d9d"/><stop offset="0.5" stop-color="#546d8e"/><stop offset="1" stop-color="#4a6282"/></linearGradient>
<radialGradient id="skin" cx="0.5" cy="0.38" r="0.68"><stop offset="0" stop-color="#ecd3bf"/><stop offset="0.55" stop-color="#e0bfa6"/><stop offset="1" stop-color="#c29a80"/></radialGradient>
<linearGradient id="hair" x1="0" y1="0" x2="1" y2="1"><stop offset="0" stop-color="#574034"/><stop offset="0.5" stop-color="#45322a"/><stop offset="1" stop-color="#3a2a22"/></linearGradient>
<radialGradient id="stub" cx="0.5" cy="0.2" r="0.8"><stop offset="0.4" stop-color="#9c7c6a" stop-opacity="0"/><stop offset="1" stop-color="#8c6c5c" stop-opacity="0.45"/></radialGradient>
</defs>
<ellipse cx="47.5" cy="71" rx="5" ry="10" fill="#d4a98d"/>
<ellipse cx="117.5" cy="70" rx="4.8" ry="10" fill="#d0a488"/>
<path d="M56 90 L112 90 L112 110 C104 120 96 130 84.5 134 C72 130 62 120 54.5 110 Z" fill="#bf9880"/>
<path d="M50 54 C49 80 53 94 58 102 C66 112 76 116 84.5 116 C94 116 103 111 109 103 C115 94 118 80 117 54 C116 36 104 25 84 25 C64 25 51 36 50 54 Z" fill="url(#skin)"/>
<path d="M54 84 C56 96 62 106 70 112 C76 115 80 116 84.5 116 C90 116 96 114 101 110 C108 104 113 94 115 82 C110 92 104 100 96 102 C90 100 80 100 74 102 C66 100 58 92 54 84 Z" fill="url(#stub)"/>
<path d="M43 62 C40 42 44 25 56 16 C68 6 92 3 107 10 C121 17 125 36 122 64 C120 55 118 47 115 41 C110 35 100 33 92 34 C80 32 68 30 58 36 C53 40 51 50 50 62 Z" fill="url(#hair)"/>
<path d="M58 20 C72 12 92 9 110 18" fill="none" stroke="#735645" stroke-width="2.5" opacity="0.55"/>
<path d="M70 14 C82 20 98 24 114 30" fill="none" stroke="#6a4d3c" stroke-width="1.6" opacity="0.5"/>
<path d="M56 59.5 C63 56 71 55.5 79 58.5" fill="none" stroke="#5e4232" stroke-width="3"/>
<path d="M92 58.5 C99 55 106 54.5 113 56.5" fill="none" stroke="#5e4232" stroke-width="3"/>
<ellipse cx="70" cy="64" rx="5" ry="2.4" fill="#efe4dc"/>
<ellipse cx="99.5" cy="63.5" rx="5" ry="2.4" fill="#efe4dc"/>
<circle cx="70.5" cy="64" r="2.2" fill="#5a4a40"/>
<circle cx="99" cy="63.5" r="2.2" fill="#5a4a40"/>
<path d="M65 62 C68 60.5 73 60.5 76 62" fill="none" stroke="#6b5040" stroke-width="0.9"/>
<path d="M94 61.5 C97 60 102 60 105 61.5" fill="none" stroke="#6b5040" stroke-width="0.9"/>
<path d="M82 62 C81 70 79 78 78 83" fill="none" stroke="#c9a288" stroke-width="2.2" opacity="0.8"/>
<path d="M78 84 C81 87 88 87 91 84" fill="none" stroke="#a67a62" stroke-width="1.6"/>
<path d="M73 94 C79 92 90 92 97 94 C91 96 80 96 73 94 Z" fill="#b9786c"/>
<path d="M74 94.5 C80 99 90 99 96 94.5 C90 97 80 97 74 94.5 Z" fill="#cf9488"/>
<path d="M54.5 108 L84.5 132 L112 103 L111 144 L108 196 L63.5 196 L59 156 Z" fill="#eef3fa"/>
<path d="M54.5 108 L66.5 158 L84.5 132 Z" fill="#f6f9fd" stroke="#cfd7e3" stroke-width="0.8"/>
<path d="M112 103 L106.5 156 L84.5 132 Z" fill="#f6f9fd" stroke="#cfd7e3" stroke-width="0.8"/>
<path d="M77 136 L84 133 L92 137 L91 151 L78 152 Z" fill="#405a7c"/>
<path d="M78 152 L91 151 L99 196 L75 196 Z" fill="#3d5678"/>
<path d="M84 152 L85 196" stroke="#34496a" stroke-width="1" opacity="0.5"/>
<path d="M2 138 C12 134 28 128 42 121 C48 117 52 112 54.5 108 L59 156 L63.5 196 L2 196 Z" fill="url(#suit)"/>
<path d="M54.5 108 L33 147 L32 160 L53.5 196 L63.5 196 L59 156 Z" fill="#4d6687"/>
<path d="M54.5 108 L33 147 L32 160 L53.5 196" fill="none" stroke="#3f5676" stroke-width="1.2"/>
<path d="M112 103 C118 110 126 116 134 119 C144 123 152 126 160 129 L160 196 L108 196 L111 144 Z" fill="url(#suit2)"/>
<path d="M112 103 L137 141 L123 157 L112 196 L108 196 L111 144 Z" fill="#4b6485"/>
<path d="M112 103 L137 141 L123 157 L112 196" fill="none" stroke="#3f5676" stroke-width="1.2"/>
</svg>
</body></html>
